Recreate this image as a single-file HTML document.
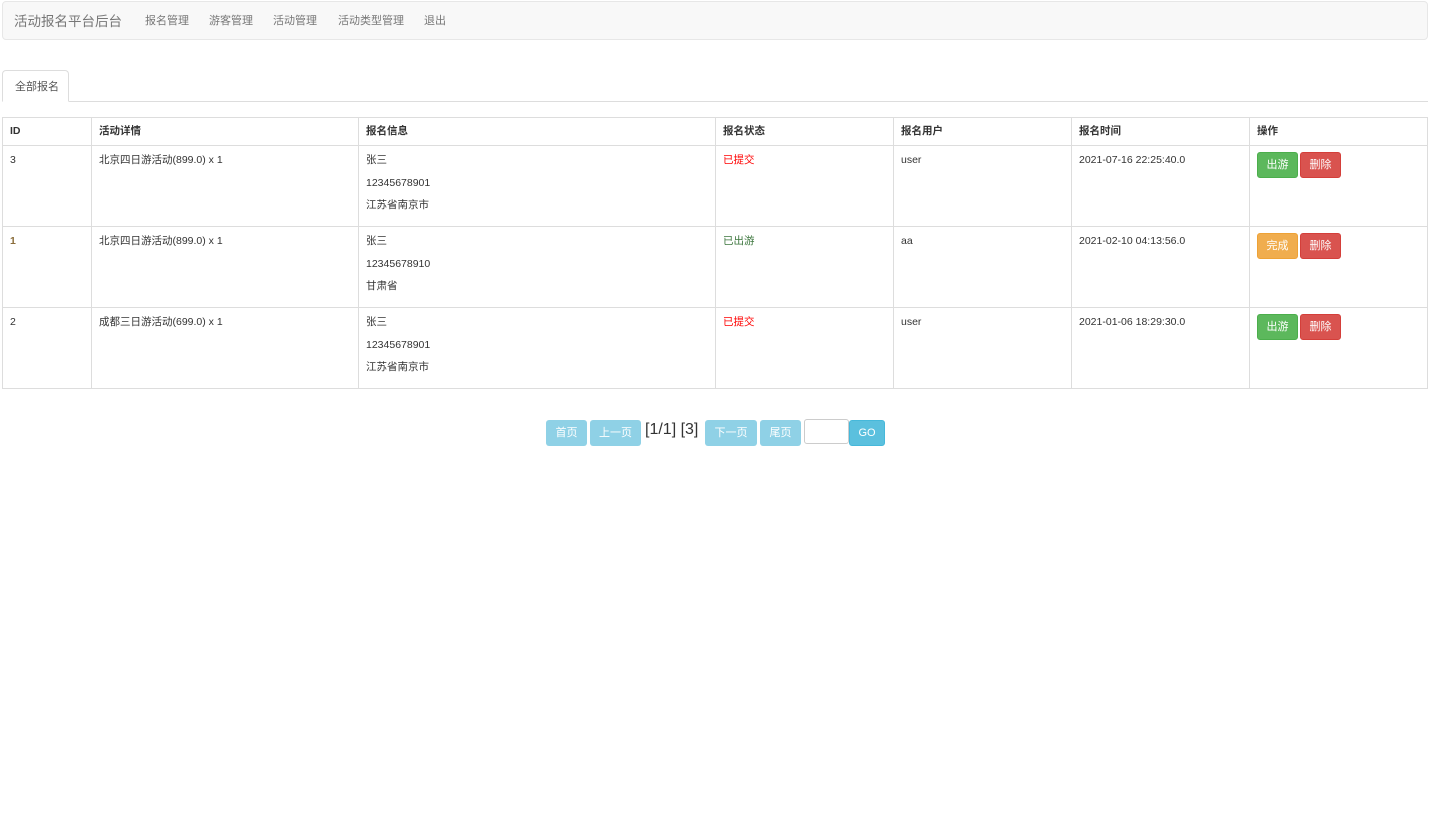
<!DOCTYPE html>
<html><head><meta charset="utf-8"><style>
*{box-sizing:border-box;margin:0;padding:0}
body{width:1438px;height:826px;background:#fff;font-family:"Liberation Sans","Noto Sans CJK SC",sans-serif;font-size:11px;color:#333;position:relative;overflow:hidden}
.a{position:absolute;white-space:nowrap}
.nav{position:absolute;left:2px;top:1px;width:1426px;height:39px;background:#f8f8f8;border:1px solid #e7e7e7;border-radius:4px}
.nl{color:#777;font-size:11px;top:12px}
.tab{position:absolute;left:2px;top:70px;width:67px;height:32px;border:1px solid #ddd;border-bottom:1px solid #fff;border-radius:4px 4px 0 0;background:#fff}
.line{position:absolute;left:2px;top:101px;width:1426px;height:1px;background:#ddd}
table{position:absolute;left:2px;top:117px;border-collapse:collapse;width:1426px;table-layout:fixed}
td,th{border:1px solid #ddd;vertical-align:top;text-align:left;padding:5px 7px;font-size:10.5px;color:#333;line-height:17px;white-space:nowrap}
th{height:28px;font-weight:bold;padding:5px 7px}
td{height:81px;padding:6px 7px 4px}
td div{height:22.5px;line-height:17px}
.btn{display:inline-block;color:#fff;font-size:11px;width:41px;height:26px;line-height:24px;text-align:center;border-radius:3px;margin-right:2px;vertical-align:top}
.g{background:#5cb85c;border:1px solid #4cae4c}.r{background:#d9534f;border:1px solid #d43f3a}.o{background:#f0ad4e;border:1px solid #eea236}
.p{position:absolute;top:420px;height:26px;line-height:26px;background:#8fd1e6;color:#fff;text-align:center;border-radius:3px;font-size:11px}
</style></head><body>
<div class="nav"></div>
<div class="a" style="left:14px;top:10px;font-size:13.5px;color:#777">活动报名平台后台</div>
<div class="a nl" style="left:145px">报名管理</div>
<div class="a nl" style="left:209px">游客管理</div>
<div class="a nl" style="left:273px">活动管理</div>
<div class="a nl" style="left:338px">活动类型管理</div>
<div class="a nl" style="left:424px">退出</div>
<div class="line"></div>
<div class="tab"></div>
<div class="a" style="left:15px;top:78px;font-size:11px;color:#555">全部报名</div>
<table>
<colgroup><col style="width:89px"><col style="width:267px"><col style="width:357px"><col style="width:178px"><col style="width:178px"><col style="width:178px"><col></colgroup>
<tr><th>ID</th><th>活动详情</th><th>报名信息</th><th>报名状态</th><th>报名用户</th><th>报名时间</th><th>操作</th></tr>
<tr><td>3</td><td>北京四日游活动(899.0) x 1</td><td><div>张三</div><div>12345678901</div><div>江苏省南京市</div></td><td style="color:#f00">已提交</td><td>user</td><td>2021-07-16 22:25:40.0</td><td><span class="btn g">出游</span><span class="btn r">删除</span></td></tr>
<tr><td style="color:#8a6d3b;font-weight:bold">1</td><td>北京四日游活动(899.0) x 1</td><td><div>张三</div><div>12345678910</div><div>甘肃省</div></td><td style="color:#3c763d">已出游</td><td>aa</td><td>2021-02-10 04:13:56.0</td><td><span class="btn o">完成</span><span class="btn r">删除</span></td></tr>
<tr><td>2</td><td>成都三日游活动(699.0) x 1</td><td><div>张三</div><div>12345678901</div><div>江苏省南京市</div></td><td style="color:#f00">已提交</td><td>user</td><td>2021-01-06 18:29:30.0</td><td><span class="btn g">出游</span><span class="btn r">删除</span></td></tr>
</table>
<div class="p" style="left:546px;width:41px">首页</div>
<div class="p" style="left:590px;width:51px">上一页</div>
<div class="a" style="left:645px;top:421px;font-size:16px;color:#333">[1/1] [3]</div>
<div class="p" style="left:705px;width:52px">下一页</div>
<div class="p" style="left:760px;width:41px">尾页</div>
<div class="a" style="left:804px;top:419px;width:45px;height:25px;border:1px solid #ccc;border-radius:3px;background:#fff"></div>
<div class="p" style="left:849px;width:36px;background:#5bc0de;border:1px solid #46b8da;line-height:24px">GO</div>
</body></html>
